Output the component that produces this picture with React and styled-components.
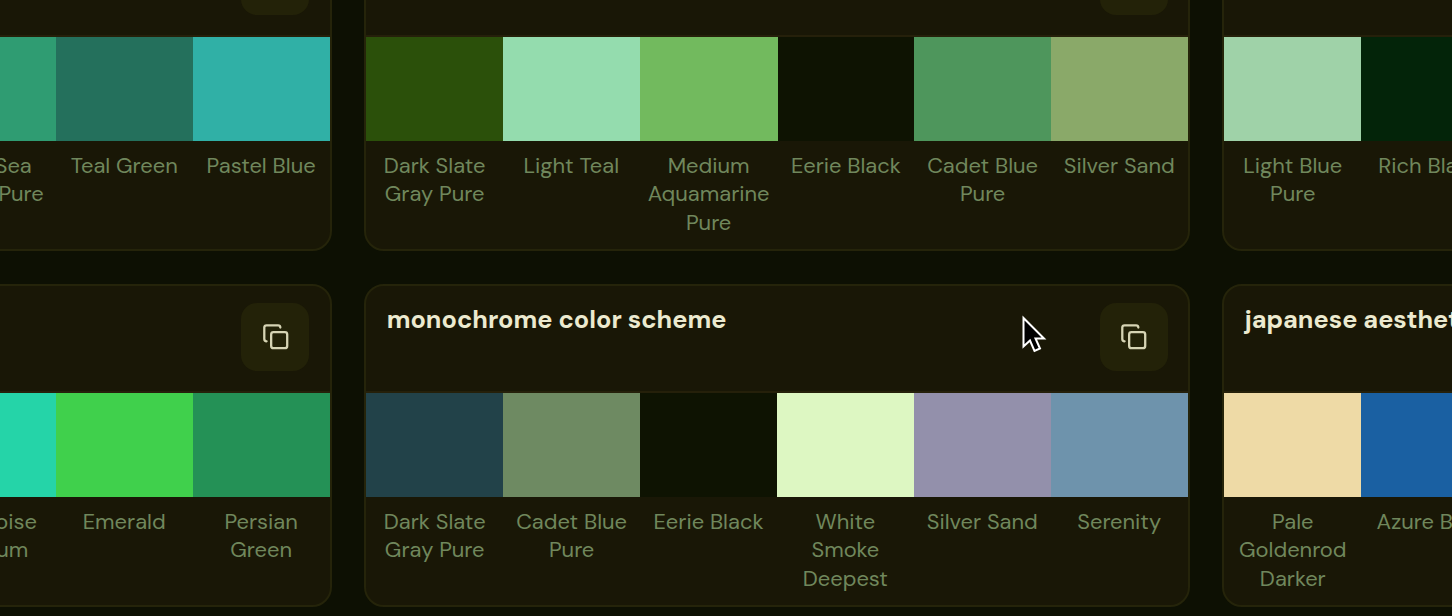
import React from 'react';
import styled, { createGlobalStyle } from 'styled-components';
import { Copy } from 'lucide-react';

const palettes = [
    {
        title: '',
        colors: [
            ['#1d7d5a', ''],
            ['#3cb371', ''],
            ['#1f8a70', ''],
            ['#2f9c72', 'Dark Sea Green Pure'],
            ['#24705c', 'Teal Green'],
            ['#30b0a6', 'Pastel Blue'],
        ],
    },
    {
        title: '',
        colors: [
            ['#2b500a', 'Dark Slate Gray Pure'],
            ['#94dcae', 'Light Teal'],
            ['#72ba5e', 'Medium Aquamarine Pure'],
            ['#0e1302', 'Eerie Black'],
            ['#4e965c', 'Cadet Blue Pure'],
            ['#8aa969', 'Silver Sand'],
        ],
    },
    {
        title: '',
        colors: [
            ['#9fd2a8', 'Light Blue Pure'],
            ['#032409', 'Rich Black'],
            ['#1c4a3a', ''],
            ['#5fa38a', ''],
            ['#c5e0d0', ''],
            ['#7fb79b', ''],
        ],
    },
    {
        title: '',
        colors: [
            ['#0d7a5f', ''],
            ['#12a37f', ''],
            ['#18b48c', ''],
            ['#25d4a8', 'Turquoise Medium'],
            ['#40d04c', 'Emerald'],
            ['#249156', 'Persian Green'],
        ],
    },
    {
        title: 'monochrome color scheme',
        colors: [
            ['#224249', 'Dark Slate Gray Pure'],
            ['#6e8a62', 'Cadet Blue Pure'],
            ['#0e1302', 'Eerie Black'],
            ['#ddf7c2', 'White Smoke Deepest'],
            ['#9390ab', 'Silver Sand'],
            ['#6e93ac', 'Serenity'],
        ],
    },
    {
        title: 'japanese aesthetic',
        colors: [
            ['#eedaa6', 'Pale Goldenrod Darker'],
            ['#1a60a2', 'Azure Blue'],
            ['#b23a48', ''],
            ['#2f3e46', ''],
            ['#f2e9e4', ''],
            ['#84a98c', ''],
        ],
    },
];

const GlobalStyle = createGlobalStyle`
    body {
        margin: 0;
        overflow: hidden;
        background-color: #0d1003;
        font-family: 'DM Sans', 'Open Sans', sans-serif;
    }
`;

const Viewport = styled.main`
    display: flex;
    align-items: flex-start;
    width: 1452px;
    height: 616px;
    overflow: hidden;
`;

const Grid = styled.div`
    flex: none;
    display: grid;
    grid-template-columns: repeat(3, 825.4px);
    grid-auto-rows: 323px;
    gap: 33px 32.7px;
    margin-top: -72px;
    margin-left: -493.85px;
`;

const Card = styled.section`
    box-sizing: border-box;
    border: 2px solid #25240a;
    border-radius: 20px;
    background-color: #191706;
    overflow: hidden;
`;

const CardHeader = styled.header`
    display: flex;
    justify-content: space-between;
    align-items: flex-start;
    box-sizing: border-box;
    height: 107px;
    padding: 17px 20.1px 0 20.4px;
    border-bottom: 2px solid #25200a;
`;

const Title = styled.h2`
    margin: -1px 0 0;
    color: #eceacf;
    font-size: 25.3px;
    font-weight: 700;
    line-height: 36px;
    white-space: nowrap;
`;

const CopyButton = styled.button`
    display: flex;
    align-items: center;
    justify-content: center;
    width: 68px;
    height: 68px;
    margin-left: auto;
    padding: 0;
    border: 0;
    border-radius: 16px;
    background-color: #232208;
    color: #d6d4b4;
`;

const Swatches = styled.div`
    display: grid;
    grid-template-columns: repeat(6, 1fr);
`;

const Swatch = styled.div`
    height: 104px;
    background-color: ${({ $color }) => $color};
`;

const Name = styled.div`
    padding: 11px 8px 0;
    color: #70875c;
    font-size: 21.9px;
    line-height: 28.3px;
    text-align: center;
`;

const Cursor = styled.svg`
    position: absolute;
    left: 1020px;
    top: 313px;
`;

const Palette = ({ title, colors }) => (
    <Card>
        <CardHeader>
            {title && <Title>{title}</Title>}
            <CopyButton aria-label='Copy palette'>
                <Copy size={27.5} strokeWidth={2} />
            </CopyButton>
        </CardHeader>
        <Swatches>
            {colors.map(([color, name]) => (
                <div key={color}>
                    <Swatch $color={color} />
                    {name && <Name>{name}</Name>}
                </div>
            ))}
        </Swatches>
    </Card>
);

const App = () => (
    <>
        <GlobalStyle />
        <Viewport>
            <Grid>
                {palettes.map((palette, i) => (
                    <Palette key={i} {...palette} />
                ))}
            </Grid>
            <Cursor width='28' height='42' viewBox='0 0 28 42'>
                <path
                    d='M3.5 5 V33.5 L10 27.5 L14.5 38 L20 35.5 L15.5 25.5 H24 Z'
                    fill='#000'
                    stroke='#fff'
                    strokeWidth='2'
                />
            </Cursor>
        </Viewport>
    </>
);

export default App;
